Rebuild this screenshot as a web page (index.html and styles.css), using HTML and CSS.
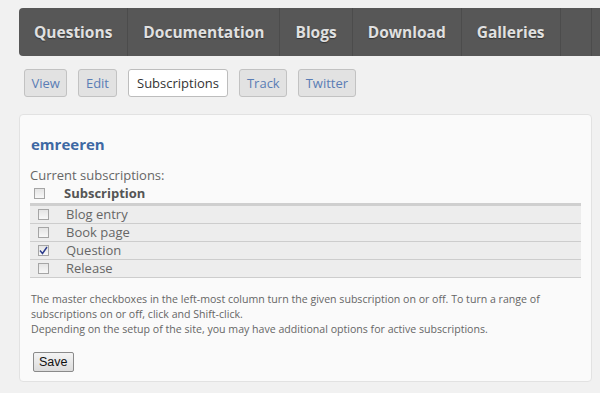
FILE: index.html
```html
<!DOCTYPE html>
<html lang="en">
<head>
    <meta charset="UTF-8">
    <title>emreeren | Subscriptions</title>
    <link rel="stylesheet" href="styles.css">
</head>
<body>
    <div class="nav">
        <a class="nav-item">Questions</a>
        <a class="nav-item">Documentation</a>
        <a class="nav-item">Blogs</a>
        <a class="nav-item">Download</a>
        <a class="nav-item">Galleries</a>
        <span class="nav-item nav-blank"></span>
        <span class="nav-item nav-blank"></span>
    </div>

    <div class="tabs">
        <a class="tab">View</a>
        <a class="tab">Edit</a>
        <a class="tab active">Subscriptions</a>
        <a class="tab">Track</a>
        <a class="tab">Twitter</a>
    </div>

    <div class="box">
        <h2 class="user">emreeren</h2>
        <div class="label">Current subscriptions:</div>
        <table class="subs">
            <thead>
                <tr>
                    <th class="cb-col"><span class="cb"></span></th>
                    <th>Subscription</th>
                </tr>
            </thead>
            <tbody>
                <tr><td class="cb-col"><span class="cb"></span></td><td>Blog entry</td></tr>
                <tr><td class="cb-col"><span class="cb"></span></td><td>Book page</td></tr>
                <tr><td class="cb-col"><span class="cb checked"><svg width="9" height="9" viewBox="0 0 9 9"><path d="M1 4.5 L3.5 7.5 L8 1" fill="none" stroke="#2b3b8c" stroke-width="1.4"/></svg></span></td><td>Question</td></tr>
                <tr><td class="cb-col"><span class="cb"></span></td><td>Release</td></tr>
            </tbody>
        </table>
        <p class="help">
            The master checkboxes in the left-most column turn the given subscription on or off. To turn a range of subscriptions on or off, click and Shift-click.<br>
            Depending on the setup of the site, you may have additional options for active subscriptions.
        </p>
        <button class="save">Save</button>
    </div>
</body>
</html>
```

FILE: styles.css
```css
body {
    margin: 0;
    padding: 8px 0 0 19px;
    background-color: #f1f1f1;
    font-family: "Open Sans", sans-serif;
    color: #666;
    overflow: hidden;
}

.nav {
    display: flex;
    height: 48px;
    background-color: #575757;
    border-radius: 4px 0 0 4px;
    white-space: nowrap;
    overflow: hidden;
}

.nav-item {
    padding: 0 15px;
    line-height: 48px;
    font-size: 15.5px;
    font-weight: bold;
    color: #e0e0e0;
    text-shadow: 0 1px 1px #333;
    border-right: 1px solid #4c4c4c;
}

.nav-blank {
    width: 1px;
}

.tabs {
    display: flex;
    gap: 11px;
    margin: 13px 0 0 5px;
}

.tab {
    height: 26px;
    line-height: 26px;
    padding: 0 6.5px;
    font-size: 13px;
    color: #5a7db5;
    background-color: #e2e2e2;
    border: 1px solid #c2c2c2;
    border-radius: 3px;
}

.tab.active {
    background-color: #fff;
    color: #333;
    padding: 0 8.5px;
    border-color: #bdbdbd;
}

.box {
    margin: 17px 8px 0 0;
    padding: 14px 10px 9px 10px;
    background-color: #fafafa;
    border: 1px solid #e2e2e2;
    border-radius: 4px;
}

.user {
    margin: 5px 0 0 1px;
    font-size: 15px;
    font-weight: bold;
    color: #3d68a3;
    line-height: 20px;
}

.label {
    margin-top: 12px;
    font-size: 13px;
    line-height: 18px;
}

.subs {
    width: 100%;
    border-collapse: collapse;
    font-size: 13px;
    margin-top: 1px;
}

.subs th {
    text-align: left;
    font-weight: bold;
    color: #555;
    height: 17px;
    line-height: 17px;
    border-bottom: 3px solid #cfcfcf;
    padding: 0 0 1px 0;
}

.subs td {
    height: 17px;
    line-height: 17px;
    padding: 0;
    background-color: #ededed;
    border-bottom: 1px solid #cdcdcd;
}

.subs td + td {
    padding-left: 6px;
}

.subs th + th {
    padding-left: 4px;
}

.cb-col {
    width: 30px;
}

.cb {
    display: inline-block;
    width: 9px;
    height: 9px;
    border: 1px solid #a5a5a5;
    background: linear-gradient(#e4e4e4, #f8f8f8);
    vertical-align: middle;
    position: relative;
    top: -1px;
}

th .cb {
    margin-left: 4px;
}

td .cb {
    margin-left: 8px;
}

.cb svg {
    display: block;
}

.help {
    margin: 14px 0 0 1px;
    font-size: 10.6px;
    line-height: 15px;
    color: #666;
}

.save {
    margin: 15px 0 0 3px;
    padding: 2px 5px;
    font-family: "Liberation Sans", Arial, sans-serif;
    font-size: 12.5px;
    color: #111;
    background: linear-gradient(#f4f4f4, #dcdcdc);
    border: 1px solid #8a8a8a;
    border-radius: 2px;
}
```
